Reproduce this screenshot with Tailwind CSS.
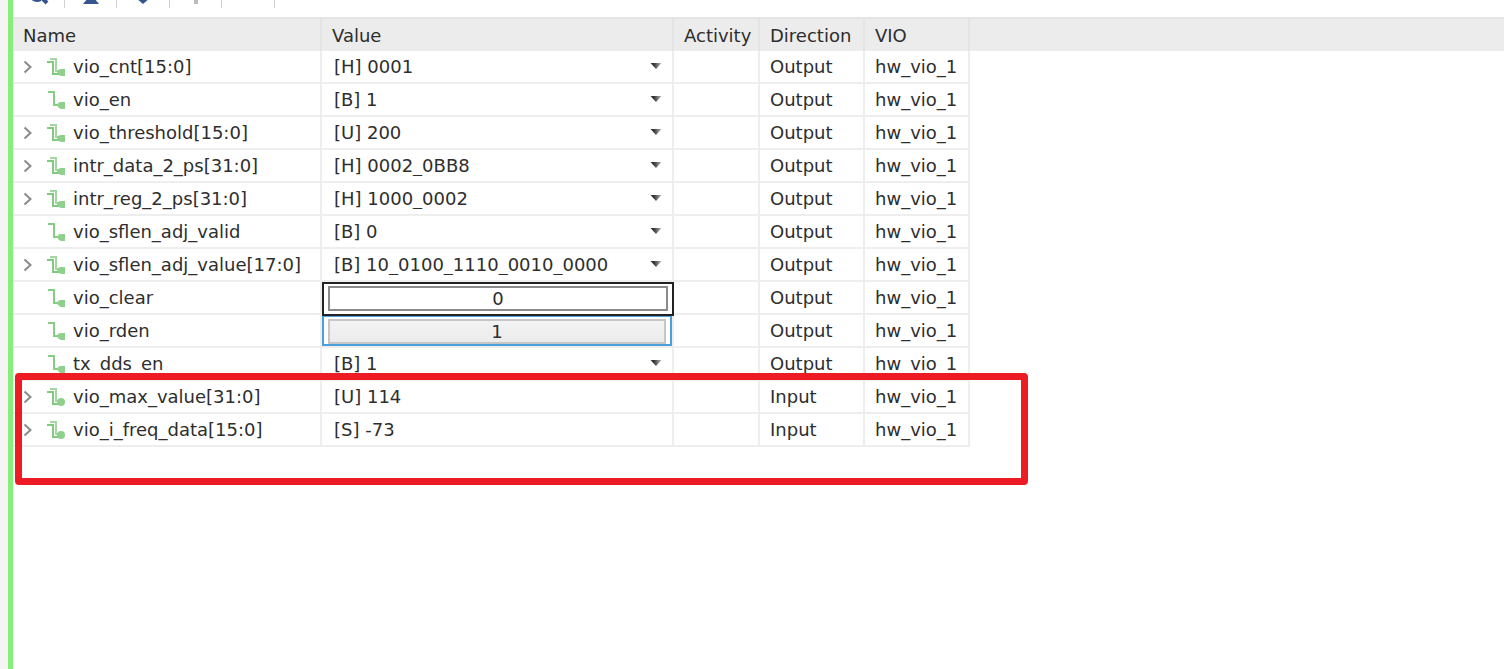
<!DOCTYPE html>
<html lang="en">
<head>
    <meta charset="UTF-8">
    <meta name="viewport" content="width=device-width, initial-scale=1.0">
    <title>hw_vio_1</title>
    <script src="https://cdn.jsdelivr.net/npm/@tailwindcss/browser@4"></script>
</head>
<body class="min-h-screen flex bg-[#f5f5f5] overflow-hidden font-['DejaVu_Sans',sans-serif] text-lg/5 text-[#2e2e2e]">

<main class="flex-1 min-w-0 ml-2 border-l-5 border-[#86ee7b] bg-white">

    <!-- Toolbar, scrolled mostly out of view -->
    <div class="h-[17px] flex items-start overflow-hidden">
        <button aria-label="Search" class="w-[52px] h-2 flex justify-center border-r border-[#d0d0d0]">
            <svg class="w-6 h-4" viewBox="0 0 24 16" fill="none" stroke="#35558f"><path d="M5 -1Q9 2.500 14 0" stroke-width="2"/><path d="M15 -2L20 3" stroke-width="4"/></svg>
        </button>
        <button aria-label="Collapse all" class="w-[52px] h-2 flex justify-center border-r border-[#d0d0d0]">
            <svg class="w-5 h-4" viewBox="0 0 20 16" fill="#35558f"><path d="M2 4L7 -2H13L18 4Z"/></svg>
        </button>
        <button aria-label="Expand all" class="w-[53px] h-2 flex justify-center border-r border-[#d0d0d0]">
            <svg class="w-5 h-4" viewBox="0 0 20 16" fill="#35558f"><path d="M3 -2H17L10 4Z"/></svg>
        </button>
        <button aria-label="Add probes" class="w-[52px] h-2 flex justify-center border-r border-[#d0d0d0]">
            <svg class="w-5 h-4" viewBox="0 0 20 16" fill="#bbbbbb"><path d="M8 0H12V4H8Z"/></svg>
        </button>
        <button aria-label="Remove probes" class="w-[53px] h-2 border-r border-[#d0d0d0]"></button>
    </div>

    <div class="relative">
        <table class="w-full table-fixed border-separate border-spacing-0 whitespace-nowrap">
            <colgroup>
                <col class="w-[309px]">
                <col class="w-[352px]">
                <col class="w-[86px]">
                <col class="w-[105px]">
                <col class="w-[105px]">
                <col>
            </colgroup>
            <thead>
                <tr class="h-[34px] bg-[#ececec] text-left">
                    <th class="pl-2.5 pt-0.5 pb-0 font-normal border-t-2 border-r-2 border-[#e4e4e4]">Name</th>
                    <th class="pl-2.5 pt-0.5 pb-0 font-normal border-t-2 border-r-2 border-[#e4e4e4]">Value</th>
                    <th class="pl-2.5 pt-0.5 pb-0 font-normal border-t-2 border-r-2 border-[#e4e4e4]">Activity</th>
                    <th class="pl-2.5 pt-0.5 pb-0 font-normal border-t-2 border-r-2 border-[#e4e4e4]">Direction</th>
                    <th class="pl-2.5 pt-0.5 pb-0 font-normal border-t-2 border-r-2 border-[#e4e4e4]">VIO</th>
                    <td class="border-t-2 border-[#e4e4e4]"></td>
                </tr>
            </thead>
            <tbody id="probes"></tbody>
        </table>

        <!-- Marker around the input probes -->
        <div class="absolute left-0.5 -bottom-[38px] w-[1013px] h-28 border-7 border-[#ed1c24] rounded-sm pointer-events-none"></div>
    </div>

</main>

<script>
/* name, value, direction, kind of value editor */
const probes = [
    ["vio_cnt[15:0]", "[H] 0001", "Output", "select"],
    ["vio_en", "[B] 1", "Output", "select"],
    ["vio_threshold[15:0]", "[U] 200", "Output", "select"],
    ["intr_data_2_ps[31:0]", "[H] 0002_0BB8", "Output", "select"],
    ["intr_reg_2_ps[31:0]", "[H] 1000_0002", "Output", "select"],
    ["vio_sflen_adj_valid", "[B] 0", "Output", "select"],
    ["vio_sflen_adj_value[17:0]", "[B] 10_0100_1110_0010_0000", "Output", "select"],
    ["vio_clear", "0", "Output", "active"],
    ["vio_rden", "1", "Output", "toggle"],
    ["tx_dds_en", "[B] 1", "Output", "select"],
    ["vio_max_value[31:0]", "[U] 114", "Input", "text"],
    ["vio_i_freq_data[15:0]", "[S] -73", "Input", "text"],
];

const chevron = `<svg class="w-2.5 h-4" viewBox="0 0 10 16" fill="none" stroke="#8a8a8a" stroke-width="2"><path d="M1.500 2.500L7.500 8L1.500 13.500"/></svg>`;

/* ---------------- ICONS ---------------- */
function probeIcon(isBus, isInput) {
    const back = isBus ? `<path d="M3 2H9V14H12" stroke="#a3d8a0" stroke-width="2"/>` : "";
    const line = isBus
        ? `<path d="M0 5H6V17H13" stroke="#7fca7c" stroke-width="2"/>`
        : `<path d="M1 2H7V15H12" stroke="#86cd83" stroke-width="2"/>`;
    const end = isInput
        ? `<circle cx="14" cy="15" r="4" fill="#8fd08c"/>`
        : `<path d="M10 15Q11 12 14 12H18V19H14Q11 18 10 15Z" fill="#8fd08c"/>`;
    return `<svg class="w-[18px] h-[19px]" viewBox="0 0 18 19" fill="none">${back}${line}${end}</svg>`;
}

/* ---------------- VALUE CELLS ---------------- */
function valueCell(name, value, kind) {
    if (kind === "select") {
        return `<div class="relative">
            <select aria-label="${name}" class="w-full h-[29px] pl-3 appearance-none bg-transparent"><option>${value}</option></select>
            <svg class="absolute right-2.5 top-2.5 w-3 h-2 pointer-events-none" viewBox="0 0 12 8">
                <defs><linearGradient id="arrow"><stop offset="0.3" stop-color="#333"/><stop offset="1" stop-color="#bbb"/></linearGradient></defs>
                <path d="M0.500 1H11.500L6 7Z" fill="url(#arrow)"/>
            </svg>
        </div>`;
    }
    if (kind === "active") {
        return `<div class="relative h-[31px]"><div class="absolute left-0 -right-0.5 top-0 h-[34px] px-1 py-0.5 border-2 border-[#222] bg-white">
            <button aria-label="${name}" class="block w-full h-[25px] border-2 border-[#8a8a8a] bg-white">${value}</button>
        </div></div>`;
    }
    if (kind === "toggle") {
        return `<div class="h-[31px] px-1 py-0.5 border-2 border-[#4ba0dc]">
            <button aria-label="${name}" class="block w-full h-[25px] border-2 border-[#c6c6c6] bg-linear-to-b from-[#f3f3f3] to-[#ebebeb]">${value}</button>
        </div>`;
    }
    return `<span class="pl-3">${value}</span>`;
}

document.getElementById("probes").innerHTML = probes.map(([name, value, direction, kind]) => {
    const isBus = name.includes("[");
    return `<tr class="h-[33px]">
        <td class="p-0 border-b-2 border-r-2 border-[#eeeeee]">
            <div class="flex items-center pl-2.5">
                <button aria-label="Expand ${name}" class="w-6 flex ${isBus ? "" : "invisible"}">${chevron}</button>
                ${probeIcon(isBus, direction === "Input")}
                <span class="pl-2">${name}</span>
            </div>
        </td>
        <td class="p-0 border-b-2 border-r-2 border-[#eeeeee]">${valueCell(name, value, kind)}</td>
        <td class="p-0 border-b-2 border-r-2 border-[#eeeeee]"></td>
        <td class="p-0 pl-2.5 border-b-2 border-r-2 border-[#eeeeee]">${direction}</td>
        <td class="p-0 pl-2.5 border-b-2 border-r-2 border-[#eeeeee]">hw_vio_1</td>
        <td class="p-0"></td>
    </tr>`;
}).join("");
</script>

</body>
</html>
